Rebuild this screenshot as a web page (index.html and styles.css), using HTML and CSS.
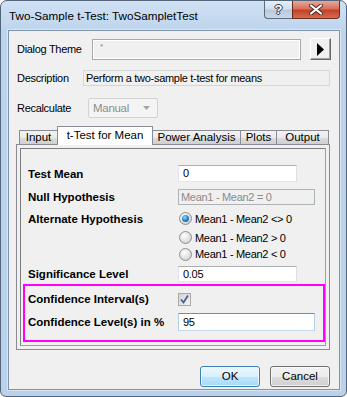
FILE: index.html
```html
<!DOCTYPE html>
<html lang="en">
<head>
    <meta charset="UTF-8">
    <title>Two-Sample t-Test: TwoSampletTest</title>
    <link rel="stylesheet" href="styles.css">
</head>
<body>
    <div class="window">
        <div class="titlebar">
            <span class="title">Two-Sample t-Test: TwoSampletTest</span>
            <div class="caption-buttons">
                <span class="cap-btn help">?</span>
                <span class="cap-btn close">
                    <svg width="14" height="11" viewBox="0 0 14 11">
                        <path d="M2 1.5 L12 9.5 M12 1.5 L2 9.5" stroke="#4a2a24" stroke-width="4" stroke-linecap="round"/>
                        <path d="M2 1.5 L12 9.5 M12 1.5 L2 9.5" stroke="#ffffff" stroke-width="2.2" stroke-linecap="round"/>
                    </svg>
                </span>
            </div>
        </div>

        <div class="client">
            <div class="top-row theme-row">
                <span class="lbl theme-lbl">Dialog Theme</span>
                <span class="theme-field">*</span>
                <span class="arrow-btn">
                    <svg width="7" height="13" viewBox="0 0 7 13"><polygon points="0,0 7,6.5 0,13" fill="#000"/></svg>
                </span>
            </div>
            <div class="top-row desc-row">
                <span class="lbl desc-lbl">Description</span>
                <span class="desc-field">Perform a two-sample t-test for means</span>
            </div>
            <div class="top-row recalc-row">
                <span class="lbl recalc-lbl">Recalculate</span>
                <span class="combo">
                    <span>Manual</span>
                    <svg width="7" height="4" viewBox="0 0 7 4"><polygon points="0,0 7,0 3.5,4" fill="#a6a6a6"/></svg>
                </span>
            </div>

            <div class="tabs">
                <span class="tab tab-input">Input</span>
                <span class="tab active tab-mean">t-Test for Mean</span>
                <span class="tab tab-power">Power Analysis</span>
                <span class="tab tab-plots">Plots</span>
                <span class="tab tab-output">Output</span>
            </div>

            <div class="panel">
                <div class="tree">
                    <div class="row r-mean">
                        <span class="name">Test Mean</span>
                        <span class="edit short">0</span>
                    </div>
                    <div class="row r-null">
                        <span class="name">Null Hypothesis</span>
                        <span class="edit long disabled">Mean1 - Mean2 = 0</span>
                    </div>
                    <div class="row r-alt">
                        <span class="name">Alternate Hypothesis</span>
                        <span class="radio checked"></span>
                        <span class="opt">Mean1 - Mean2 &lt;&gt; 0</span>
                    </div>
                    <div class="row r-opt">
                        <span class="name"></span>
                        <span class="radio"></span>
                        <span class="opt">Mean1 - Mean2 &gt; 0</span>
                    </div>
                    <div class="row r-opt2">
                        <span class="name"></span>
                        <span class="radio"></span>
                        <span class="opt">Mean1 - Mean2 &lt; 0</span>
                    </div>
                    <div class="row r-sig">
                        <span class="name">Significance Level</span>
                        <span class="edit short sig">0.05</span>
                    </div>
                    <div class="highlight">
                        <div class="row r-ci">
                            <span class="name">Confidence Interval(s)</span>
                            <span class="check">
                                <svg width="11" height="11" viewBox="0 0 11 11"><path d="M2 5.5 L4.5 8.5 L9 1.5" fill="none" stroke="#4b5f92" stroke-width="1.8"/></svg>
                            </span>
                        </div>
                        <div class="row r-cl">
                            <span class="name">Confidence Level(s) in %</span>
                            <span class="edit long focus">95</span>
                        </div>
                    </div>
                </div>
            </div>

            <div class="buttons">
                <span class="btn default">OK</span>
                <span class="btn">Cancel</span>
            </div>
        </div>
    </div>
</body>
</html>
```

FILE: styles.css
```css
body {
    margin: 0;
    background-color: #ffffff;
    font-family: "Liberation Sans", Arial, sans-serif;
}

.window {
    width: 347px;
    height: 397px;
    box-sizing: border-box;
    border: 1px solid #53657a;
    border-radius: 7px 7px 6px 6px;
    background: linear-gradient(180deg, #d0e1f4 0, #bed4ec 30px, #b9d1ea 100%);
    overflow: hidden;
}

/* title bar */

.titlebar {
    height: 29px;
    display: flex;
    align-items: flex-start;
}

.title {
    flex: 1;
    padding: 7px 0 0 8px;
    font-size: 11.7px;
    line-height: 15px;
    color: #000;
}

.caption-buttons {
    display: flex;
    margin-right: 6px;
}

.cap-btn {
    height: 18px;
    box-sizing: border-box;
    display: flex;
    align-items: center;
    justify-content: center;
    border: 1px solid #5a6b80;
    border-top: none;
}

.help {
    width: 28px;
    border-right: none;
    border-radius: 0 0 0 4px;
    background: linear-gradient(180deg, #e8eff7 0, #d3dfec 45%, #b9cadd 55%, #c9d8e9 100%);
    color: #fff;
    font-weight: bold;
    font-size: 13px;
    text-shadow: 0 0 1px #2d3b4d, 1px 0 0 #2d3b4d, -1px 0 0 #2d3b4d, 0 1px 0 #2d3b4d, 0 -1px 0 #2d3b4d;
}

.close {
    width: 48px;
    border-radius: 0 0 4px 0;
    border-color: #6b2c24;
    background: linear-gradient(180deg, #e9a899 0, #d8705d 45%, #c2412b 55%, #d46d4c 100%);
}

/* client area */

.client {
    margin-left: 7px;
    width: 332px;
    height: 360px;
    box-sizing: border-box;
    border: 1px solid #7e92aa;
    box-shadow: 0 0 0 1px rgba(255, 255, 255, 0.45);
    background-color: #f0f0f0;
    font-size: 11px;
    letter-spacing: -0.3px;
    color: #000;
}

.top-row {
    display: flex;
    align-items: center;
    padding-left: 8px;
}

.theme-row {
    margin-top: 7px;
    height: 22px;
}

.desc-row {
    margin-top: 10px;
    height: 16px;
}

.recalc-row {
    margin-top: 12px;
    height: 20px;
}

.theme-lbl { width: 75px; }
.desc-lbl { width: 66px; }
.recalc-lbl { width: 71px; }

.theme-field {
    width: 209px;
    height: 21px;
    box-sizing: border-box;
    border: 1px solid #a8a8a8;
    box-shadow: inset 0 0 0 1px #ffffff;
    padding: 2px 0 0 7px;
    font-size: 8px;
    color: #8a8a8a;
}

.arrow-btn {
    margin-left: 9px;
    width: 21px;
    height: 22px;
    box-sizing: border-box;
    border: 1px solid;
    border-color: #ffffff #696969 #696969 #ffffff;
    box-shadow: inset -1px -1px 0 #a0a0a0;
    display: flex;
    align-items: center;
    justify-content: center;
}

.desc-field {
    width: 247px;
    height: 16px;
    box-sizing: border-box;
    border: 1px solid #d6d6d6;
    padding-left: 2px;
    line-height: 14px;
}

.combo {
    width: 70px;
    height: 20px;
    box-sizing: border-box;
    border: 1px solid #d3d3d3;
    border-radius: 2px;
    background-color: #f4f4f4;
    color: #8d8d8d;
    font-size: 11.5px;
    display: flex;
    align-items: center;
    justify-content: space-between;
    padding: 0 7px 0 4px;
}

/* tabs */

.tabs {
    margin: 8px 0 0 7px;
    height: 18px;
    display: flex;
    align-items: flex-end;
    padding-left: 3px;
    position: relative;
    z-index: 1;
    font-size: 11.5px;
    letter-spacing: 0;
}

.tab {
    height: 14px;
    box-sizing: border-box;
    border: 1px solid #898c95;
    border-bottom: none;
    margin-right: -1px;
    background: linear-gradient(180deg, #f2f2f2 0, #ebebeb 50%, #dddddd 51%, #cfcfcf 100%);
    text-align: center;
    line-height: 13px;
}

.tab.active {
    height: 19px;
    margin-bottom: -1px;
    background: #ffffff;
    line-height: 17px;
    padding-bottom: 2px;
}

.tab-input { width: 39px; }
.tab-mean { width: 96px; }
.tab-power { width: 89px; }
.tab-plots { width: 37px; }
.tab-output { width: 53px; }

.panel {
    margin-left: 7px;
    width: 314px;
    height: 206px;
    box-sizing: border-box;
    border: 1px solid #898c95;
    padding: 3px;
}

.tree {
    height: 198px;
    box-sizing: border-box;
    border: 1px solid #a0a0a0;
    border-top-color: #7d7d7d;
    border-left-color: #7d7d7d;
    padding-top: 13px;
}

.row {
    display: flex;
    align-items: center;
    padding-left: 7px;
}

.name {
    width: 150px;
    flex-shrink: 0;
    font-weight: bold;
    font-size: 11.5px;
    letter-spacing: 0;
}

.r-mean { height: 23px; }
.r-null { height: 23px; }
.r-alt { height: 21px; }
.r-opt { height: 17px; }
.r-opt2 { height: 16px; }
.r-sig {
    height: 22px;
    align-items: flex-end;
    padding-bottom: 2px;
    box-sizing: border-box;
}
.r-sig .name { padding-bottom: 2px; }

.edit {
    height: 17px;
    box-sizing: border-box;
    border: 1px solid;
    border-color: #abadb3 #dbdfe6 #e3e9ef #e2e3ea;
    background-color: #ffffff;
    padding-left: 4px;
    line-height: 15px;
}

.edit.short { width: 119px; }
.edit.long { width: 137px; }
.edit.sig { height: 16px; line-height: 14px; }

.edit.disabled {
    height: 16px;
    line-height: 14px;
    background-color: #f0f0f0;
    border-color: #adb2b5;
    color: #8a8a8a;
    padding-left: 2px;
}

.edit.focus {
    height: 18px;
    line-height: 16px;
    border-color: #5c93cf #b5cfe7 #c5daed #b5cfe7;
}

.radio {
    margin-left: 1px;
    width: 13px;
    height: 13px;
    box-sizing: border-box;
    border: 1px solid #8e8f8f;
    border-radius: 50%;
    background: radial-gradient(circle at 40% 35%, #ffffff 0, #e6e6e6 45%, #c6c6c6 100%);
    display: flex;
    align-items: center;
    justify-content: center;
}

.radio.checked::after {
    content: "";
    width: 7px;
    height: 7px;
    border-radius: 50%;
    background: radial-gradient(circle at 40% 35%, #8fd9fb 0, #2f8cd2 45%, #154a86 100%);
}

.opt { margin-left: 3px; }

.highlight {
    margin: 0 0 0 2px;
    width: 302px;
    height: 58px;
    box-sizing: border-box;
    border: 2px solid #ff00ff;
    padding-top: 4px;
}

.highlight .row { padding-left: 3px; }

.r-ci { height: 18px; }
.r-cl { height: 20px; margin-top: 4px; }

.check {
    width: 13px;
    height: 13px;
    box-sizing: border-box;
    border: 1px solid #a8a8a8;
    background: linear-gradient(135deg, #d4d4d4 0, #f2f2f2 100%);
    display: flex;
    align-items: center;
    justify-content: center;
}

/* dialog buttons */

.buttons {
    margin-top: 16px;
    height: 21px;
    display: flex;
    justify-content: flex-end;
    gap: 10px;
    padding-right: 9px;
}

.btn {
    width: 60px;
    height: 21px;
    box-sizing: border-box;
    border: 1px solid #707070;
    border-radius: 3px;
    background: linear-gradient(180deg, #f2f2f2 0, #ebebeb 50%, #dddddd 51%, #cfcfcf 100%);
    box-shadow: inset 0 0 0 1px rgba(255, 255, 255, 0.7);
    text-align: center;
    line-height: 19px;
    font-size: 11.5px;
    letter-spacing: 0;
}

.btn.default {
    border-color: #3c7fb1;
    background: linear-gradient(180deg, #eaf6fd 0, #d9f0fc 50%, #bee6fd 51%, #a7d9f5 100%);
}
```
